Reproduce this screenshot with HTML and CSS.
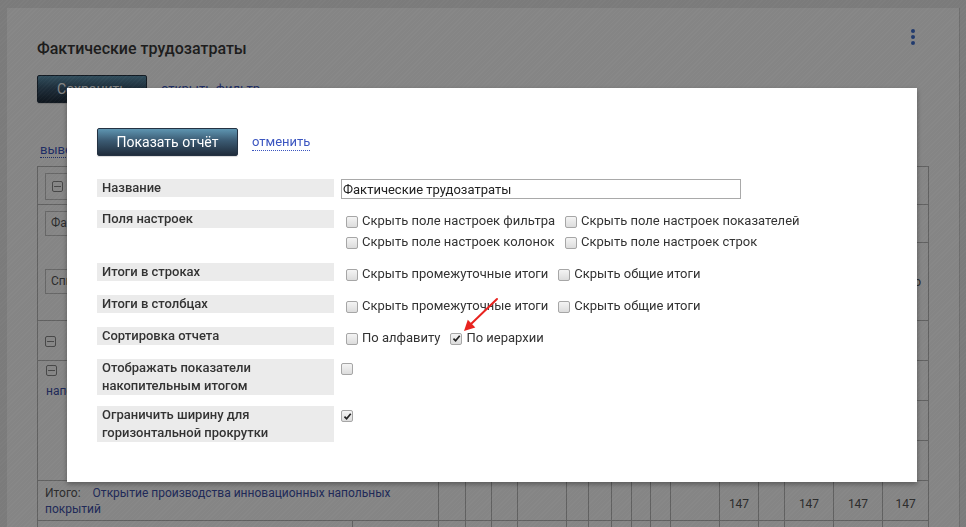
FILE: index.html
```html
<!DOCTYPE html>
<html lang="ru">
<head>
<meta charset="utf-8">
<title>Фактические трудозатраты</title>
<link rel="stylesheet" href="styles.css">
</head>
<body>
<div class="card">
  <div class="card-head">
    <h1 class="title">Фактические трудозатраты</h1>
    <button class="kebab" type="button" aria-label="Меню"><span></span><span></span><span></span></button>
  </div>
  <div class="toolbar">
    <button class="btn" type="button">Сохранить</button>
    <a class="dlink" href="#">открыть фильтр</a>
  </div>
  <div class="show-all"><a class="dlink" href="#">вывести все строки</a></div>
  <table class="report">
    <colgroup>
      <col><col><col><col><col><col><col><col><col><col><col><col><col><col><col><col><col>
    </colgroup>
    <tr class="h38">
      <td colspan="17" class="top pad6"><div class="fbox"><span class="tg"></span></div></td>
    </tr>
    <tr class="h38">
      <td colspan="2" rowspan="2" class="top pad6">
        <div class="fbox sel">Фактические</div>
        <div class="fbox sel second">Список</div>
      </td>
      <td colspan="15"></td>
    </tr>
    <tr class="h78">
      <td colspan="15" class="tot">Итого</td>
    </tr>
    <tr class="h40">
      <td colspan="2"><span class="tg"></span></td>
      <td colspan="15"></td>
    </tr>
    <tr class="h40">
      <td colspan="2" rowspan="3" class="top pad4">
        <span class="tg blk"></span>
        <a class="tlink" href="#">наполнение</a>
      </td>
      <td colspan="15"></td>
    </tr>
    <tr class="h40"><td colspan="15"></td></tr>
    <tr class="h40"><td colspan="15"></td></tr>
    <tr class="h40">
      <td colspan="2" class="itogo"><span class="itogo-l">Итого:</span><a class="tlink" href="#">Открытие производства инновационных напольных покрытий</a></td>
      <td></td><td></td><td></td><td></td><td></td><td></td><td></td><td></td><td></td><td></td>
      <td class="n">147</td><td></td><td class="n">147</td><td class="n">147</td><td class="n">147</td>
    </tr>
    <tr class="h40">
      <td class="top pad4"><span class="tg"></span></td>
      <td></td><td></td><td></td><td></td><td></td><td></td><td></td><td></td><td></td><td></td><td></td><td></td><td></td><td></td><td></td><td></td>
    </tr>
  </table>
</div>

<div class="overlay"></div>

<div class="modal">
  <div class="modal-head">
    <button class="btn" type="button">Показать отчёт</button>
    <a class="dlink" href="#">отменить</a>
  </div>
  <div class="form">
    <div class="lbl">Название</div>
    <div class="val"><input class="txt" type="text" value="Фактические трудозатраты"></div>

    <div class="lbl">Поля настроек</div>
    <div class="val opts two">
      <label class="opt"><input type="checkbox">Скрыть поле настроек фильтра</label>
      <label class="opt"><input type="checkbox">Скрыть поле настроек показателей</label>
      <label class="opt"><input type="checkbox">Скрыть поле настроек колонок</label>
      <label class="opt"><input type="checkbox">Скрыть поле настроек строк</label>
    </div>

    <div class="lbl">Итоги в строках</div>
    <div class="val opts">
      <label class="opt"><input type="checkbox">Скрыть промежуточные итоги</label>
      <label class="opt"><input type="checkbox">Скрыть общие итоги</label>
    </div>

    <div class="lbl">Итоги в столбцах</div>
    <div class="val opts">
      <label class="opt"><input type="checkbox">Скрыть промежуточные итоги</label>
      <label class="opt"><input type="checkbox">Скрыть общие итоги</label>
    </div>

    <div class="lbl">Сортировка отчета</div>
    <div class="val opts">
      <label class="opt"><input type="checkbox">По алфавиту</label>
      <label class="opt"><input type="checkbox" checked>По иерархии</label>
    </div>

    <div class="lbl">Отображать показатели накопительным итогом</div>
    <div class="val single"><input type="checkbox"></div>

    <div class="lbl">Ограничить ширину для горизонтальной прокрутки</div>
    <div class="val single"><input type="checkbox" checked></div>
  </div>

  <svg class="arrow" width="48" height="42" viewBox="0 0 48 42" aria-hidden="true">
    <line x1="42" y1="4" x2="15.5" y2="29.5" stroke="#e8231f" stroke-width="2" stroke-linecap="round"/>
    <polygon points="9,36 20.3,32.6 12.8,24.8" fill="#e8231f"/>
  </svg>
</div>
</body>
</html>
```

FILE: styles.css
```css
* { box-sizing: border-box; }

html, body {
  margin: 0;
  height: 100%;
  overflow: hidden;
}

body {
  background: #ebebeb;
  padding: 8px 7px 0;
  font-family: Roboto, "Noto Sans", "Liberation Sans", sans-serif;
  font-size: 13px;
  color: #333;
}

a { text-decoration: none; }

/* ---------- page card (behind the overlay) ---------- */
.card {
  background: #fff;
  height: 700px;
  overflow: hidden;
  padding: 21px 31px 0 30px;
  box-shadow: 1px 0 0 #d2d2d2;
}

.card-head {
  display: flex;
  justify-content: space-between;
  align-items: flex-start;
}

.title {
  margin: 10px 0 0;
  font-size: 16px;
  line-height: 20px;
  font-weight: 500;
  color: #363636;
}

.kebab {
  width: 30px;
  padding: 0;
  border: 0;
  background: none;
  display: flex;
  flex-direction: column;
  align-items: center;
  gap: 2px;
}

.kebab span {
  width: 4px;
  height: 4px;
  border-radius: 50%;
  background: #3f6fd0;
}

.toolbar {
  margin-top: 16px;
  display: flex;
  align-items: center;
  gap: 14px;
}

.btn {
  height: 28px;
  padding: 0 19px;
  border: 1px solid #243242;
  border-radius: 2px;
  background: linear-gradient(#5e95b1, #3b5a72 45%, #1f2c3b);
  color: #fff;
  font-family: Roboto, "Noto Sans", "Liberation Sans", sans-serif;
  font-size: 14px;
  line-height: 26px;
  box-shadow: 0 1px 1px rgba(0,0,0,.15);
}

.toolbar .btn { width: 110px; padding: 0; }

.dlink {
  color: #3c56c0;
  font-size: 13px;
  line-height: 16px;
  border-bottom: 1px dotted currentColor;
}

.show-all {
  margin: 38px 0 7px;
  padding-left: 3px;
  line-height: 18px;
}

/* ---------- report table ---------- */
.report {
  width: 891px;
  border-collapse: collapse;
  table-layout: fixed;
  color: #666;
  font-size: 12px;
}

.report col:nth-child(1)  { width: 315px; }
.report col:nth-child(2)  { width: 86px; }
.report col:nth-child(3)  { width: 27px; }
.report col:nth-child(4)  { width: 26px; }
.report col:nth-child(5)  { width: 26px; }
.report col:nth-child(6)  { width: 49px; }
.report col:nth-child(7)  { width: 22px; }
.report col:nth-child(8)  { width: 23px; }
.report col:nth-child(9)  { width: 20px; }
.report col:nth-child(10) { width: 19px; }
.report col:nth-child(11) { width: 20px; }
.report col:nth-child(12) { width: 49px; }
.report col:nth-child(13) { width: 39px; }
.report col:nth-child(14) { width: 26px; }
.report col:nth-child(15) { width: 49px; }
.report col:nth-child(16) { width: 49px; }
.report col:nth-child(17) { width: 46px; }

.report td {
  border: 1px solid #b8b8b8;
  padding: 0 7px;
  vertical-align: middle;
}

.h38 { height: 38px; }
.h40 { height: 40px; }
.h78 { height: 78px; }

.report td.top { vertical-align: top; }
.report td.pad6 { padding-top: 6px; }
.report td.pad4 { padding-top: 4px; padding-left: 8px; }

.fbox {
  width: 320px;
  border: 1px solid #c4c4c4;
  height: 27px;
  padding: 7px 6px;
  color: #555;
}

.fbox.sel {
  width: 240px;
  height: 25px;
  padding: 0 5px;
  line-height: 23px;
  white-space: nowrap;
  overflow: hidden;
}

.fbox.second { margin-top: 33px; }

.tg {
  display: inline-block;
  width: 11px;
  height: 11px;
  border: 1px solid #888;
  border-radius: 2px;
  vertical-align: middle;
  background: linear-gradient(#888, #888) center / 7px 1px no-repeat;
}

.fbox .tg { display: block; }
.tg.blk { display: block; margin-bottom: 8px; }

.tlink { color: #3c4fa8; }

.tot { text-align: right; padding-right: 5px; color: #555; font-size: 13px; }

.itogo { line-height: 16px; }
.itogo-l { margin-right: 12px; color: #555; }

.report td.n { text-align: center; padding: 6px 0 0; color: #555; }

/* ---------- overlay + modal ---------- */
.overlay {
  position: fixed;
  inset: 0;
  background-color: rgba(0, 0, 0, .48);
  background-image: repeating-linear-gradient(-45deg, rgba(255,255,255,.025) 0 1px, transparent 1px 3px);
}

.modal {
  position: fixed;
  left: 67px;
  top: 88px;
  width: 850px;
  background: #fff;
  padding: 40px 30px;
  box-shadow: 0 2px 5px rgba(0,0,0,.35);
}

.modal-head {
  display: flex;
  align-items: center;
  gap: 14px;
}

.modal-head .btn { width: 141px; padding: 0; }

.form {
  margin-top: 23px;
  display: grid;
  grid-template-columns: 237px 1fr;
  column-gap: 7px;
  row-gap: 11px;
  align-items: start;
}

.lbl {
  background: #ebebeb;
  padding: 0 60px 0 5px;
  font-weight: 500;
  line-height: 18px;
  color: #333;
}

.txt {
  display: block;
  width: 400px;
  height: 20px;
  margin: 0;
  padding: 0 1px;
  border: 1px solid #a9a9a9;
  font-family: Roboto, "Noto Sans", "Liberation Sans", sans-serif;
  font-size: 13px;
  color: #222;
  outline: none;
}

.opts {
  display: flex;
  flex-wrap: wrap;
  column-gap: 5px;
}

.opts.two {
  display: grid;
  grid-template-columns: auto auto;
  justify-content: start;
}

.opt {
  display: inline-flex;
  align-items: center;
  height: 21px;
  padding-left: 5px;
  color: #333;
  white-space: nowrap;
}

input[type="checkbox"] {
  appearance: none;
  -webkit-appearance: none;
  width: 12px;
  height: 12px;
  margin: 2px 4px 0 0;
  border: 1px solid #a6a6a6;
  border-radius: 2px;
  background: linear-gradient(#f4f4f4, #dcdcdc);
  flex: none;
}

input[type="checkbox"]:checked {
  background:
    url("data:image/svg+xml;utf8,<svg xmlns='http://www.w3.org/2000/svg' viewBox='0 0 10 10'><path d='M1.6 5.2 L4 7.6 L8.6 2' fill='none' stroke='%23222' stroke-width='1.9'/></svg>") center / 9px 9px no-repeat,
    linear-gradient(#f4f4f4, #dcdcdc);
}

.single { padding-top: 4px; line-height: 0; }
.single input[type="checkbox"] { margin: 0; }

.arrow {
  position: absolute;
  left: 388px;
  top: 207px;
}
```
